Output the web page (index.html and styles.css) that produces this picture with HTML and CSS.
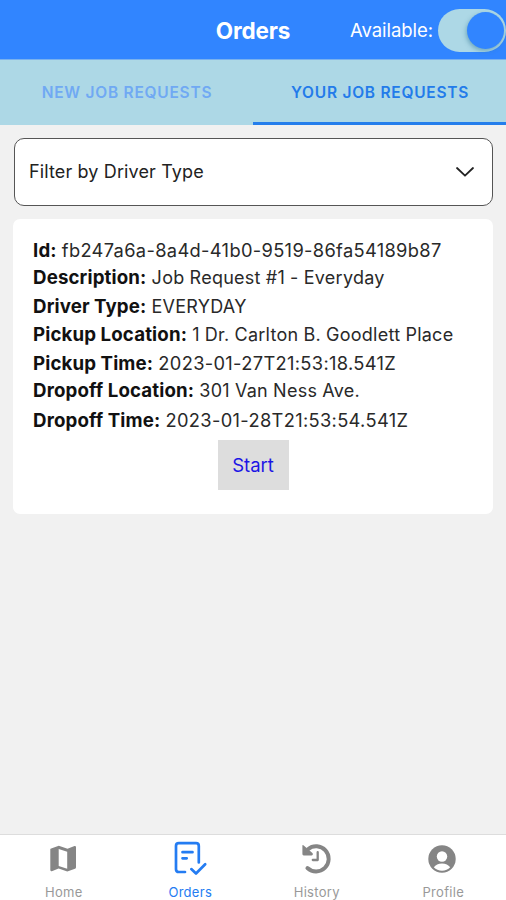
FILE: index.html
```html
<!DOCTYPE html>
<html lang="en">
<head>
<meta charset="utf-8">
<title>Orders</title>
<link rel="stylesheet" href="styles.css">
</head>
<body>
<div class="app">
  <header class="header">
    <h1 class="title">Orders</h1>
    <div class="availability"><span class="available-label">Available:</span><span class="switch"><span class="thumb"></span></span></div>
  </header>
  <nav class="tabs">
    <div class="tab"><span>NEW JOB REQUESTS</span></div>
    <div class="tab active"><span>YOUR JOB REQUESTS</span></div>
  </nav>
  <main class="content">
    <div class="filter">
      <span class="filter-text">Filter by Driver Type</span>
      <svg class="chevron" width="20" height="12" viewBox="0 0 20 12"><path d="M2 2l8 7.7L18 2"/></svg>
    </div>
    <section class="card">
      <p><b>Id:</b> <span class="code">fb247a6a-8a4d-41b0-9519-86fa54189b87</span></p>
      <p><b>Description:</b> <span>Job Request #1 - Everyday</span></p>
      <p><b>Driver Type:</b> <span>EVERYDAY</span></p>
      <p><b>Pickup Location:</b> <span>1 Dr. Carlton B. Goodlett Place</span></p>
      <p><b>Pickup Time:</b> <span class="code">2023-01-27T21:53:18.541Z</span></p>
      <p><b>Dropoff Location:</b> <span>301 Van Ness Ave.</span></p>
      <p><b>Dropoff Time:</b> <span class="code">2023-01-28T21:53:54.541Z</span></p>
      <button class="start">Start</button>
    </section>
  </main>
  <footer class="bottom">
    <div class="nav-item">
      <svg class="icon" viewBox="0 -0.5 40 40"><path fill="currentColor" fill-rule="evenodd" d="M7.5 9.2L15.8 6.2L24.5 9.2L31.5 6.5Q33 6.2 33 7.7V27.8Q33 28.9 32 29.2L24.3 32L15.6 29L8.8 31.7Q7.3 32 7.3 30.6V9.8ZM15.7 9.4V26.4L24.2 29.3V12.3Z"/></svg>
      <span>Home</span>
    </div>
    <div class="nav-item selected">
      <svg class="icon" viewBox="0 -0.5 40 40"><g fill="none" stroke="currentColor" stroke-width="2.7" stroke-linecap="round" stroke-linejoin="round"><path d="M15 32.5H8.8Q6 32.5 6 29.7V6.5Q6 3.7 8.8 3.7H26Q28.8 3.7 28.8 6.5V23M12.5 12.7H22.5M12.5 18.8H16.7M21.3 29.6L26 34L35.2 24.8"/></g></svg>
      <span>Orders</span>
    </div>
    <div class="nav-item">
      <svg class="icon" viewBox="-1 -0.5 40 40"><path d="M11 9.7A12.6 12.6 0 1 1 10.4 28.5" fill="none" stroke="currentColor" stroke-width="3.9" stroke-linecap="round"/><path d="M5.4 6.2Q5.4 4.9 6.4 5.8L15.7 13.7Q16.4 15.9 14.5 15.9H6.7Q5.4 15.9 5.4 14.6Z" fill="currentColor"/><path d="M20.7 12.7V20.5H15.8" fill="none" stroke="currentColor" stroke-width="2.3" stroke-linecap="round" stroke-linejoin="round"/></svg>
      <span>History</span>
    </div>
    <div class="nav-item">
      <svg class="icon" viewBox="0 -0.5 40 40"><circle cx="19" cy="19.5" r="13.7" fill="currentColor"/><circle cx="19" cy="17" r="5.2" fill="#fff"/><path d="M10.8 27.8Q13.5 24 19 24T27.2 27.8Q24 31.2 19 31.2T10.8 27.8Z" fill="#fff"/></svg>
      <span>Profile</span>
    </div>
  </footer>
</div>
</body>
</html>
```
FILE: styles.css
```css
* { box-sizing: border-box; }
body { margin: 0; font-family: Inter, "Liberation Sans", sans-serif; background: #f1f1f1; }
.app { width: 506px; height: 900px; display: flex; flex-direction: column; overflow: hidden; background: #f1f1f1; }
.header { height: 60px; flex: none; background: #3185ff; color: #fff; display: grid; grid-template-columns: 1fr auto 1fr; align-items: center; border-bottom: 1px solid #79b1ee; }
.title { grid-column: 2; margin: 1px 0 0; font-size: 22.5px; font-weight: 700; letter-spacing: -.1px; }
.availability { display: flex; align-items: center; justify-content: flex-end; margin-top: 1px; }
.available-label { font-size: 18.5px; letter-spacing: -.05px; margin-right: 5px; }
.switch { width: 68px; height: 43px; border-radius: 22px; background: #add8e6; display: flex; align-items: center; justify-content: flex-end; padding-right: 2px; }
.thumb { width: 37px; height: 37px; border-radius: 50%; background: #3185ff; box-shadow: -1px 2px 4px #347a9980; }
.tabs { height: 65px; flex: none; display: flex; background: #add8e6; }
.tab { flex: 1; display: flex; align-items: center; justify-content: center; padding: 2px 0 0 1px; border-bottom: 3px solid transparent; color: #70a9f3; font-size: 15.5px; font-weight: 600; letter-spacing: .75px; }
.tab.active { color: #237bea; border-color: #247eec; }
.content { flex: 1; padding: 13px 13px 0; }
.filter { height: 68px; border: 1px solid #555; border-radius: 10px; margin-left: 1px; background: #fff; display: flex; align-items: center; justify-content: space-between; padding: 0 17px 0 14px; color: #222; }
.filter-text { font-size: 18px; letter-spacing: .13px; margin-top: -1px; }
.chevron { fill: none; stroke: #222; stroke-width: 1.8; stroke-linecap: round; stroke-linejoin: round; }
.card { margin-top: 13px; height: 295px; background: #fff; border-radius: 7px; padding: 17px 20px; color: #111; }
.card p { margin: 0; height: 28.3px; line-height: 28.6px; font-size: 18px; white-space: nowrap; letter-spacing: .25px; word-spacing: -.2px; }
.card b { font-size: 18.7px; font-weight: 650; letter-spacing: .13px; }
.card span { color: #292929; }
.card .code { font-size: 18.3px; letter-spacing: .33px; }
.start { display: block; width: 71px; height: 50px; margin: 6px auto 0; padding: 0; border: 0; background: #ddd; color: #1c15e5; font: 18.5px Inter, "Liberation Sans", sans-serif; }
.bottom { height: 66px; flex: none; background: #fff; border-top: 1px solid #ddd; display: flex; }
.nav-item { flex: 1; display: flex; flex-direction: column; align-items: center; color: #858585; font-size: 13px; letter-spacing: .3px; padding-top: 4px; }
.nav-item > span { line-height: 18px; margin-top: 4px; margin-left: 1px; color: #999; }
.nav-item.selected, .nav-item.selected > span { color: #247cf2; }
.icon { width: 40px; height: 40px; flex: none; }
```
